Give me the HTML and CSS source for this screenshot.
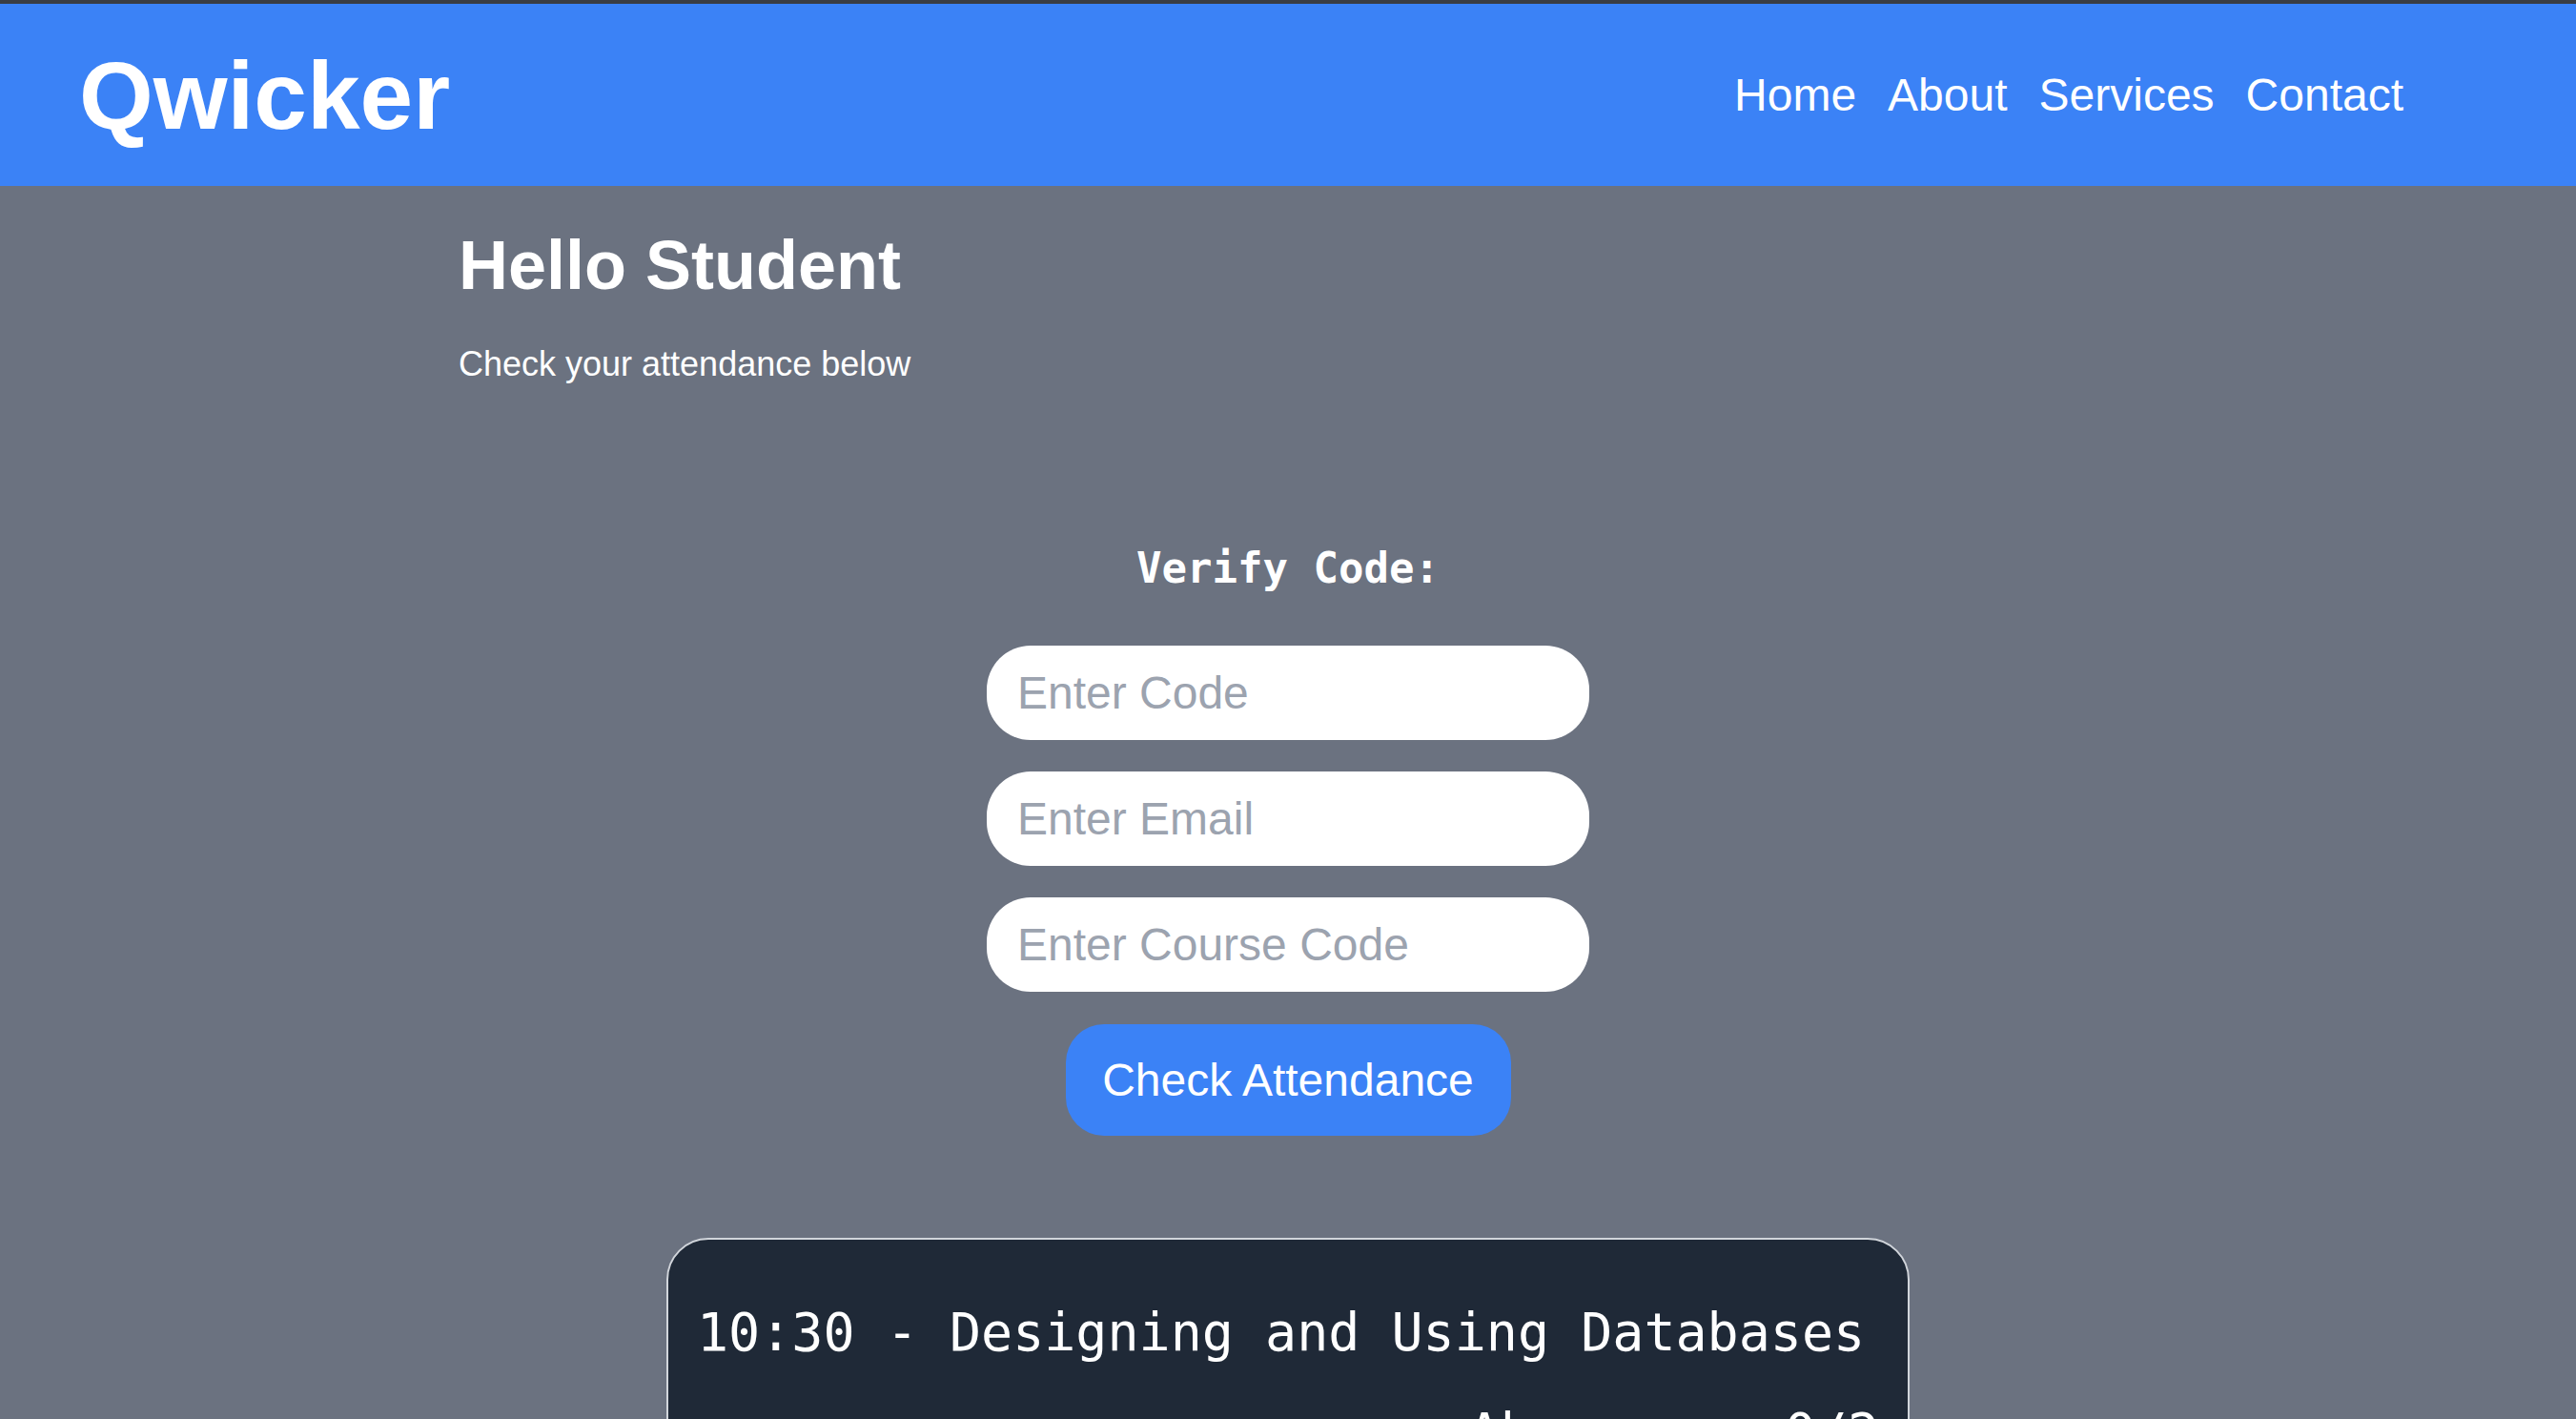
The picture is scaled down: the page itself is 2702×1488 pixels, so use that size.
FILE: index.html
```html
<!DOCTYPE html>
<html lang="en">
<head>
<meta charset="utf-8">
<title>Qwicker - Student</title>
<link rel="stylesheet" href="styles.css">
</head>
<body>
<header class="topbar">
  <div class="logo">Qwicker</div>
  <nav class="nav">
    <a class="nav-link" href="#">Home</a>
    <a class="nav-link" href="#">About</a>
    <a class="nav-link" href="#">Services</a>
    <a class="nav-link" href="#">Contact</a>
  </nav>
</header>
<main class="main">
  <section class="greeting">
    <h1 class="greeting-title">Hello Student</h1>
    <p class="greeting-sub">Check your attendance below</p>
  </section>
  <section class="verify">
    <h2 class="verify-title">Verify Code:</h2>
    <form class="verify-form">
      <input class="field" type="text" placeholder="Enter Code">
      <input class="field" type="email" placeholder="Enter Email">
      <input class="field" type="text" placeholder="Enter Course Code">
      <button class="check-btn" type="button">Check Attendance</button>
    </form>
  </section>
  <section class="card">
    <div class="card-title">10:30 - Designing and Using Databases</div>
    <div class="card-stat">Absences: 0/2</div>
    <div class="card-stat">Attended: 2/2</div>
  </section>
</main>
</body>
</html>
```
FILE: styles.css
```css
html {
  scrollbar-width: none;
}
html::-webkit-scrollbar {
  display: none;
}
body {
  margin: 0;
  background: #6b7280;
  border-top: 4px solid #3a3d43;
  font-family: "Liberation Sans", Arial, sans-serif;
  color: #ffffff;
}
.topbar {
  height: 191px;
  background: #3b82f6;
  display: flex;
  align-items: center;
  justify-content: space-between;
  padding: 0 181px 0 83px;
}
.logo {
  font-size: 100px;
  font-weight: 700;
  line-height: 1;
}
.nav {
  display: flex;
  gap: 33px;
}
.nav-link {
  color: #ffffff;
  text-decoration: none;
  font-size: 48px;
  line-height: 1;
}
.main {
  display: flex;
  flex-direction: column;
  align-items: center;
}
.greeting {
  width: 1740px;
  padding-top: 40px;
}
.greeting-title {
  margin: 0;
  font-size: 72px;
  font-weight: 700;
  line-height: 1.2;
}
.greeting-sub {
  margin: 34px 0 0;
  font-size: 36px;
  line-height: 1.5;
}
.verify {
  margin-top: 161px;
  display: flex;
  flex-direction: column;
  align-items: center;
}
.verify-title {
  margin: 0;
  font-family: "DejaVu Sans Mono", monospace;
  font-size: 44px;
  font-weight: 700;
  line-height: 1.2;
}
.verify-form {
  margin-top: 54px;
  display: flex;
  flex-direction: column;
  align-items: center;
  gap: 33px;
}
.field {
  box-sizing: border-box;
  width: 632px;
  height: 99px;
  border: none;
  border-radius: 46px;
  padding: 0 32px;
  background: #ffffff;
  font-family: "Liberation Sans", Arial, sans-serif;
  font-size: 48px;
  color: #111827;
  outline: none;
}
.field::placeholder {
  color: #9ca3af;
}
.check-btn {
  box-sizing: border-box;
  width: 467px;
  height: 117px;
  margin-top: 1px;
  border: none;
  border-radius: 40px;
  background: #3b82f6;
  color: #ffffff;
  font-family: "Liberation Sans", Arial, sans-serif;
  font-size: 48px;
  cursor: pointer;
}
.card {
  box-sizing: border-box;
  width: 1304px;
  margin-top: 107px;
  padding: 56px 30px 60px;
  background: #1f2937;
  border: 2px solid #d1d5db;
  border-radius: 44px;
  font-family: "DejaVu Sans Mono", monospace;
  font-size: 55px;
  line-height: 1.5;
  display: flex;
  flex-direction: column;
  gap: 22px;
}
.card-title {
  white-space: nowrap;
}
.card-stat {
  text-align: right;
  white-space: nowrap;
}
```
